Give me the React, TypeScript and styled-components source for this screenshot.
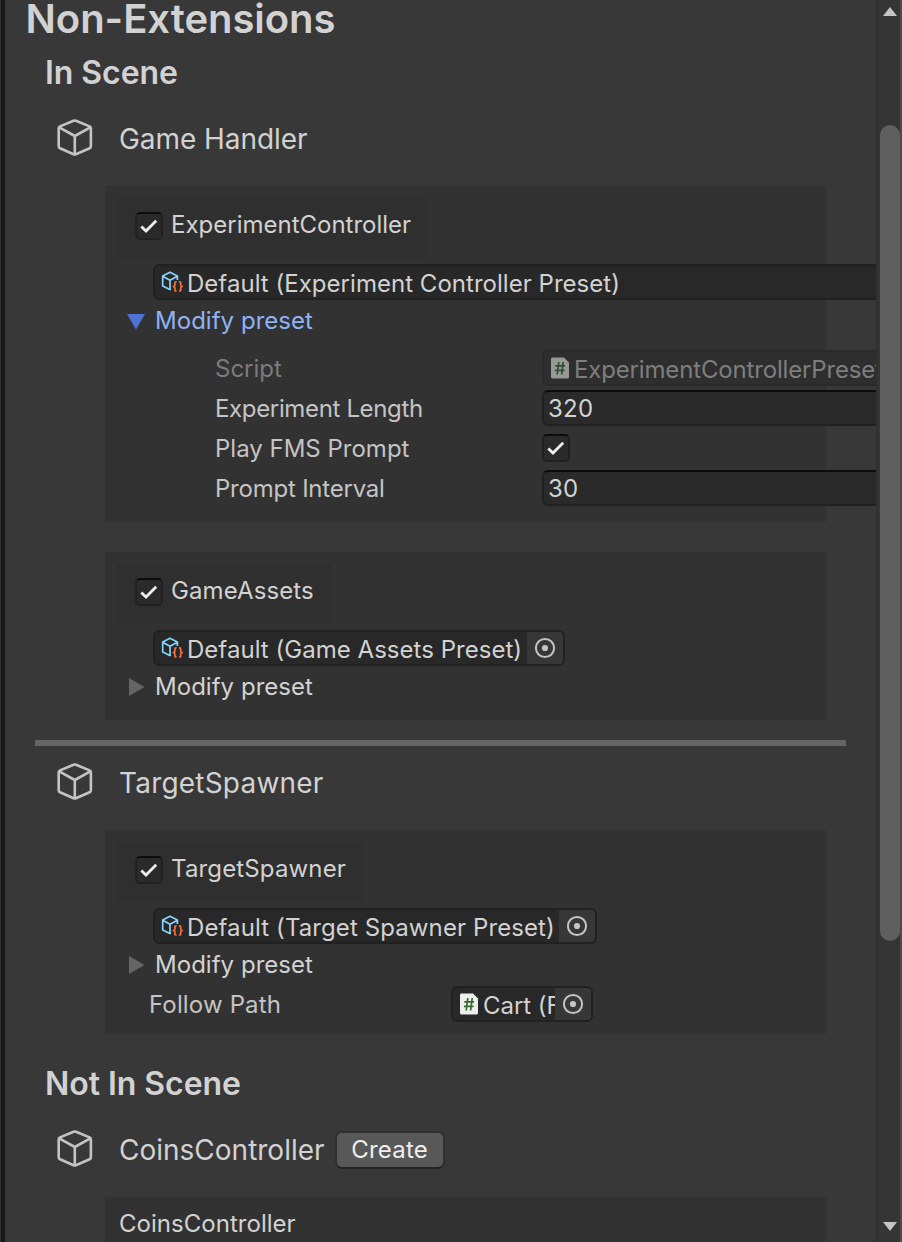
import React from "react";
import styled, { createGlobalStyle } from "styled-components";

const GlobalStyle = createGlobalStyle`
  * { box-sizing: border-box; }
  html, body { margin: 0; padding: 0; background: #383838; overflow: hidden; }
`;

const Window = styled.div`
  display: flex;
  width: 902px;
  height: 1242px;
  overflow: hidden;
  background: #383838;
  color: #d2d2d2;
  font-family: Inter, "Liberation Sans", sans-serif;
  font-size: 24px;
  line-height: 30px;
  letter-spacing: 0.03px;
  white-space: nowrap;
`;

const DockEdge = styled.div`
  flex: none;
  width: 5px;
  background: #191919;
  border-left: 1px solid #303030;
`;

const ScrollView = styled.main`
  flex: none;
  width: 871px;
  overflow: hidden;
`;

const ScrollBar = styled.aside`
  flex: none;
  display: flex;
  flex-direction: column;
  align-items: center;
  width: 26px;
  padding: 7px 0 11px 2px;
  background: #353535;
  border-left: 2px solid #303030;
  border-right: 2px solid #4b4b4b;
`;

const Thumb = styled.div`
  width: 20px;
  height: 816px;
  margin: 109px 0 auto;
  border-radius: 10px;
  background: #5f5f5f;
`;

const Title = styled.h1`
  margin: 0;
  padding-left: 20.5px;
  height: 46px;
  font-size: 40px;
  line-height: 37px;
  font-weight: 600;
  letter-spacing: -0.04px;
`;

const Subtitle = styled.h2<{ $top?: number }>`
  margin: ${(p) => p.$top ?? 0}px 0 0;
  padding-left: 40px;
  height: 60px;
  font-size: 32px;
  line-height: 54px;
  font-weight: 600;
  letter-spacing: -0.05px;
`;

const ObjectHeader = styled.div`
  display: flex;
  align-items: center;
  height: 80px;
  padding: 0 0 16px 50px;
`;

const ObjectName = styled.span<{ $tracking?: number }>`
  margin: 2px 0 0 24px;
  font-size: 28px;
  letter-spacing: ${(p) => p.$tracking ?? 0}px;
`;

const CreateButton = styled.button`
  width: 110px;
  height: 38px;
  margin: 2px 0 0 10px;
  padding: 0;
  border: 2px solid #303030;
  border-bottom-color: #242424;
  border-radius: 7px;
  background: #585858;
  color: #eeeeee;
  font: inherit;
  letter-spacing: 0.2px;
  line-height: 32px;
`;

const Panel = styled.section<{ $bottom?: number }>`
  display: flex;
  flex-direction: column;
  align-items: flex-start;
  width: 721px;
  margin-left: 100px;
  padding: 12px 12px ${(p) => p.$bottom ?? 12}px;
  background: #323232;
  & + & { margin-top: 30px; }
`;

const ToggleBox = styled.label`
  display: flex;
  align-items: flex-start;
  height: 60px;
  margin-bottom: 6px;
  padding: 14px 17px 0 18px;
  background: #2f2f2f;
`;

const ToggleName = styled.span<{ $tracking?: number }>`
  margin: -2px 0 0 8px;
  letter-spacing: ${(p) => p.$tracking ?? 0.03}px;
`;

const ComponentName = styled.span`
  margin-left: 2px;
`;

const CheckFrame = styled.span`
  flex: none;
  display: flex;
  align-items: center;
  justify-content: center;
  width: 28px;
  height: 28px;
  border: 2px solid #212121;
  border-top-color: #0d0d0d;
  border-radius: 5px;
  background: #2a2a2a;
`;

const Field = styled.div<{ $width: number; $indent?: number; $disabled?: boolean }>`
  flex: none;
  display: flex;
  align-items: center;
  width: ${(p) => p.$width}px;
  height: 36px;
  margin-left: ${(p) => p.$indent ?? 0}px;
  padding-left: 6px;
  overflow: hidden;
  border: 2px solid ${(p) => (p.$disabled ? "#2a2a2a" : "#212121")};
  border-radius: 6px;
  background: ${(p) => (p.$disabled ? "#2e2e2e" : "#282828")};
  color: ${(p) => (p.$disabled ? "#7e7e7e" : "#d2d2d2")};
`;

const FieldText = styled.span<{ $tracking?: number }>`
  flex: 1;
  min-width: 0;
  margin-left: 4px;
  padding-top: 4px;
  overflow: hidden;
  letter-spacing: ${(p) => p.$tracking ?? 0.03}px;
`;

const PickerButton = styled.span`
  flex: none;
  display: flex;
  align-items: center;
  justify-content: center;
  width: 36px;
  height: 32px;
  background: #373737;
`;

const NumberField = styled(Field)`
  padding: 2px 0 0 4px;
  border-top-color: #0d0d0d;
  background: #2a2a2a;
  letter-spacing: 0.3px;
`;

const Foldout = styled.div<{ $open?: boolean }>`
  display: flex;
  align-items: center;
  height: 42px;
  padding-left: 10px;
  color: ${(p) => (p.$open ? "#8fb2f7" : "#d2d2d2")};
`;

const FoldoutName = styled.span`
  margin-left: 8px;
`;

const Properties = styled.div`
  display: flex;
  flex-direction: column;
  gap: 4px;
  margin: 8px 0 0 98px;
`;

const Property = styled.div<{ $disabled?: boolean; $indent?: number }>`
  display: flex;
  align-items: center;
  height: 36px;
  margin-left: ${(p) => p.$indent ?? 0}px;
  color: ${(p) => (p.$disabled ? "#7b7b7b" : "#c4c4c4")};
`;

const PropertyName = styled.span<{ $width: number; $tracking?: number }>`
  flex: none;
  width: ${(p) => p.$width}px;
  padding-top: 2px;
  letter-spacing: ${(p) => p.$tracking ?? 0}px;
`;

const Divider = styled.hr`
  width: 811px;
  height: 6px;
  margin: 20px 0 4px 30px;
  border: 0;
  background: #656565;
`;

const CubeIcon = () => (
  <svg width="40" height="40" viewBox="0 0 40 40" fill="none" stroke="#c4c4c4" strokeWidth="2.6" strokeLinejoin="round">
    <path d="M18.6 2.8 5 8.4Q3.700 9 3.700 10.500V28.300Q3.700 29.700 5 30.300L18.600 36.300Q19.800 36.800 21 36.300L34.600 30.300Q35.900 29.700 35.900 28.300V10.500Q35.900 9 34.600 8.400L21 2.800Q19.800 2.300 18.600 2.800Z" />
    <path d="M4.200 9.400 19.800 18 35.400 9.400M19.800 18V36.400" />
  </svg>
);

const PresetIcon = () => (
  <svg width="22" height="24" viewBox="0 0 22 24" fill="none" strokeWidth="1.7" strokeLinejoin="round">
    <path d="M10 19.100 8.800 19.500 1.700 16V6L9 2.200 16.400 6V10M1.700 6.200 9 10.200 16.400 6.200M9 10.200V19.300" stroke="#86d3fb" />
    <path d="M15.600 11.800H14.900Q13.900 11.800 13.900 12.900V14.900Q13.900 16.500 12.300 16.500 13.900 16.500 13.900 18V19.900Q13.900 21 14.900 21H15.600M18 11.800H18.700Q19.700 11.800 19.700 12.900V14.900Q19.700 16.500 21.300 16.500 19.700 16.500 19.700 18V19.900Q19.700 21 18.700 21H18" stroke="#f5713f" />
  </svg>
);

const ScriptIcon = ({ dim }: { dim?: boolean }) => (
  <svg width="20" height="22" viewBox="0 0 20 22" opacity={dim ? 0.55 : 1}>
    <path d="M2 .5H14L19 5.500V20Q19 21.500 17.500 21.500H2.500Q1 21.500 1 20V2Q1 .5 2 .5Z" fill="#efefef" />
    <path d="M8.800 5 7.200 17.500M13.200 5 11.600 17.500M5.300 8.800H15M4.900 13.400H14.600" stroke="#35692f" strokeWidth="1.700" fill="none" />
  </svg>
);

const PickerIcon = () => (
  <svg width="22" height="22" viewBox="0 0 22 22">
    <circle cx="11" cy="11" r="9.100" fill="none" stroke="#c4c4c4" strokeWidth="2" />
    <circle cx="11" cy="11" r="3.100" fill="#c4c4c4" />
  </svg>
);

const Checkbox = () => (
  <CheckFrame>
    <svg width="20" height="20" viewBox="0 0 20 20" fill="none">
      <path d="M2.300 10.500 7 15 17.200 4.800" stroke="#eeeeee" strokeWidth="2.800" />
    </svg>
  </CheckFrame>
);

const FoldoutArrow = ({ open }: { open?: boolean }) => (
  <svg width="20" height="20" viewBox="0 0 20 20">
    {open ? <path d="M0 3H18L9 18.500Z" fill="#4f71d3" /> : <path d="M2 1V19L17.500 10Z" fill="#656565" />}
  </svg>
);

const ScrollArrow = ({ down }: { down?: boolean }) => (
  <svg width="14" height="9" viewBox="0 0 14 9">
    <path d={down ? "M0 0H14L7 9Z" : "M7 0 14 9H0Z"} fill="#c4c4c4" />
  </svg>
);

const Toggle = ({ name, tracking }: { name: string; tracking?: number }) => (
  <ToggleBox>
    <Checkbox />
    <ToggleName $tracking={tracking}>{name}</ToggleName>
  </ToggleBox>
);

const PresetField = ({ name, width, tracking }: { name: string; width: number; tracking?: number }) => (
  <Field $width={width} $indent={36}>
    <PresetIcon />
    <FieldText $tracking={tracking}>{name}</FieldText>
    <PickerButton>
      <PickerIcon />
    </PickerButton>
  </Field>
);

const ModifyPreset = ({ open }: { open?: boolean }) => (
  <Foldout $open={open}>
    <FoldoutArrow open={open} />
    <FoldoutName>Modify preset</FoldoutName>
  </Foldout>
);

export default function App() {
  return (
    <Window>
      <GlobalStyle />
      <DockEdge />
      <ScrollView>
        <Title>Non-Extensions</Title>
        <Subtitle>In Scene</Subtitle>
        <ObjectHeader>
          <CubeIcon />
          <ObjectName $tracking={-0.05}>Game Handler</ObjectName>
        </ObjectHeader>
        <Panel $bottom={16}>
          <Toggle name="ExperimentController" tracking={0} />
          <PresetField name="Default (Experiment Controller Preset)" width={800} />
          <ModifyPreset open />
          <Properties>
            <Property $disabled>
              <PropertyName $width={327}>Script</PropertyName>
              <Field $width={420} $disabled>
                <ScriptIcon dim />
                <FieldText $tracking={-0.16}>ExperimentControllerPreset</FieldText>
              </Field>
            </Property>
            <Property>
              <PropertyName $width={327} $tracking={-0.35}>Experiment Length</PropertyName>
              <NumberField $width={420}>320</NumberField>
            </Property>
            <Property>
              <PropertyName $width={327}>Play FMS Prompt</PropertyName>
              <Checkbox />
            </Property>
            <Property>
              <PropertyName $width={327} $tracking={-0.22}>Prompt Interval</PropertyName>
              <NumberField $width={420}>30</NumberField>
            </Property>
          </Properties>
        </Panel>
        <Panel>
          <Toggle name="GameAssets" tracking={0.1} />
          <PresetField name="Default (Game Assets Preset)" width={412} />
          <ModifyPreset />
        </Panel>
        <Divider />
        <ObjectHeader>
          <CubeIcon />
          <ObjectName $tracking={0.2}>TargetSpawner</ObjectName>
        </ObjectHeader>
        <Panel>
          <Toggle name="TargetSpawner" tracking={0.15} />
          <PresetField name="Default (Target Spawner Preset)" width={444} tracking={0.1} />
          <ModifyPreset />
          <Property $indent={32}>
            <PropertyName $width={302} $tracking={0.15}>Follow Path</PropertyName>
            <Field $width={142}>
              <ScriptIcon />
              <FieldText $tracking={-0.05}>Cart (Follow Path)</FieldText>
              <PickerButton>
                <PickerIcon />
              </PickerButton>
            </Field>
          </Property>
        </Panel>
        <Subtitle $top={23}>Not In Scene</Subtitle>
        <ObjectHeader>
          <CubeIcon />
          <ObjectName>CoinsController</ObjectName>
          <CreateButton>Create</CreateButton>
        </ObjectHeader>
        <Panel>
          <ComponentName>CoinsController</ComponentName>
        </Panel>
      </ScrollView>
      <ScrollBar>
        <ScrollArrow />
        <Thumb />
        <ScrollArrow down />
      </ScrollBar>
    </Window>
  );
}
